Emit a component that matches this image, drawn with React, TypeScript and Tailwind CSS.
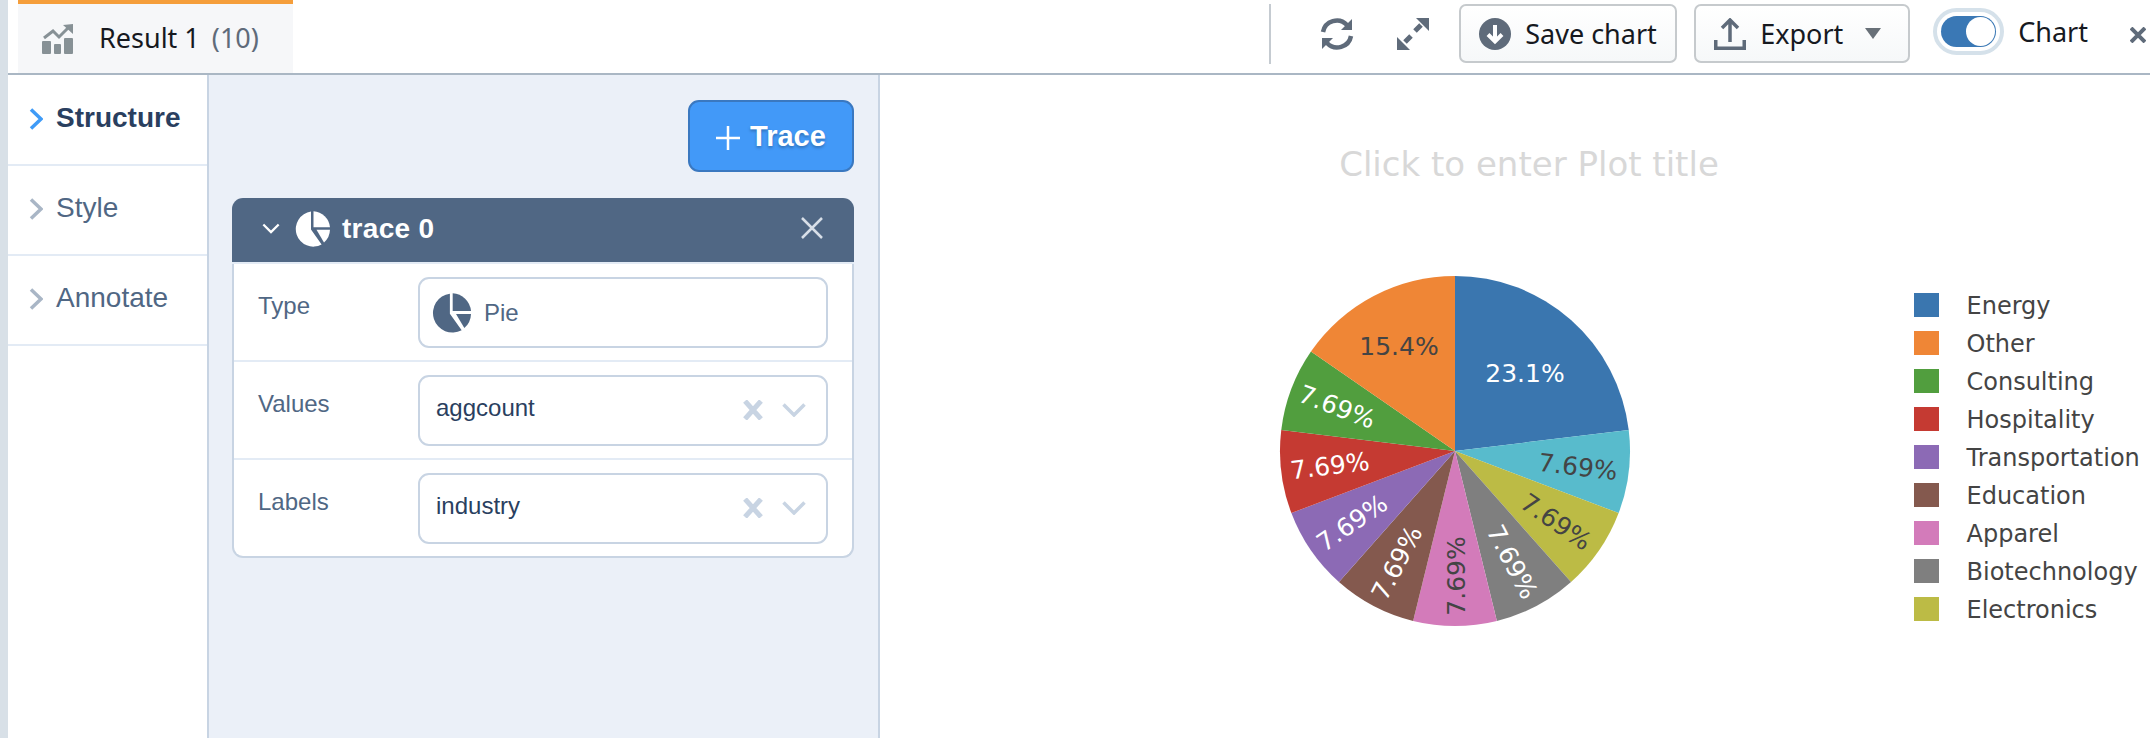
import React from "react";

const slices = [
  { name: "Energy", size: 3, color: "#3a76af", label: "23.1%", x: 1525, y: 373, rot: 0, text: "#ffffff" },
  { name: "Teal", size: 1, color: "#58bbcc", label: "7.69%", x: 1578, y: 467, rot: 6.9, text: "#444444" },
  { name: "Electronics", size: 1, color: "#bcbb45", label: "7.69%", x: 1556, y: 522, rot: 34.6, text: "#444444" },
  { name: "Biotechnology", size: 1, color: "#7f7f7f", label: "7.69%", x: 1512, y: 562, rot: 62.3, text: "#ffffff" },
  { name: "Apparel", size: 1, color: "#d37bba", label: "7.69%", x: 1456, y: 576, rot: -90, text: "#444444" },
  { name: "Education", size: 1, color: "#84594e", label: "7.69%", x: 1397, y: 563, rot: -62.3, text: "#ffffff" },
  { name: "Transportation", size: 1, color: "#8c6ab5", label: "7.69%", x: 1352, y: 523, rot: -34.6, text: "#ffffff" },
  { name: "Hospitality", size: 1, color: "#c53a32", label: "7.69%", x: 1330, y: 466, rot: -6.9, text: "#ffffff" },
  { name: "Consulting", size: 1, color: "#519e3e", label: "7.69%", x: 1337, y: 407, rot: 20.8, text: "#ffffff" },
  { name: "Other", size: 2, color: "#ef8636", label: "15.4%", x: 1399, y: 346, rot: 0, text: "#444444" },
];

const legend = [
  ["Energy", "#3a76af"],
  ["Other", "#ef8636"],
  ["Consulting", "#519e3e"],
  ["Hospitality", "#c53a32"],
  ["Transportation", "#8c6ab5"],
  ["Education", "#84594e"],
  ["Apparel", "#d37bba"],
  ["Biotechnology", "#7f7f7f"],
  ["Electronics", "#bcbb45"],
];

const slicePath = (from: number, to: number) => {
  const cx = 1455;
  const cy = 451;
  const r = 175;
  const a = (from / 13) * Math.PI * 2;
  const b = (to / 13) * Math.PI * 2;
  const large = to - from > 6.5 ? 1 : 0;
  return `M${cx} ${cy}L${cx + r * Math.sin(a)} ${cy - r * Math.cos(a)}A${r} ${r} 0 ${large} 1 ${cx + r * Math.sin(b)} ${cy - r * Math.cos(b)}Z`;
};

const PieIcon = ({ className }: { className: string }) => (
  <svg viewBox="0 0 36 36" className={className} fill="currentColor">
    <path d="M19.5 0.2A17.6 17.6 0 0 1 36 16.2L19.5 16.2Z" />
    <path d="M36 18.8A17.6 17.6 0 0 1 30 31.5L22.5 18.8Z" />
    <path d="M17 0.6L17 18.6L27.6 33.6A17.6 17.6 0 1 1 17 0.6Z" />
  </svg>
);

const ChevronRight = ({ className }: { className: string }) => (
  <svg viewBox="0 0 14 22" className={className} fill="none" stroke="currentColor" strokeWidth="3.5">
    <path d="M2 1.5L12 11L2 20.5" />
  </svg>
);

const SideItem = ({ label, active }: { label: string; active?: boolean }) => (
  <div className="h-[90px] border-b-2 border-[#e3ebf5] flex items-start pt-[25px] pl-[21px] font-['Liberation_Sans',sans-serif] text-[28px] leading-[34px]">
    <ChevronRight className={`w-[14px] h-[22px] mt-[7px] mr-[13px] ${active ? "text-[#3f9bf7]" : "text-[#a9b6c6]"}`} />
    <span className={active ? "font-bold text-[#2a3f5f]" : "text-[#506784]"}>{label}</span>
  </div>
);

const ClearIcons = () => (
  <div className="ml-auto flex items-center gap-[19px] mr-[20px] -mt-[1px]">
    <svg viewBox="0 0 20 20" className="w-5 h-5" fill="none" stroke="#c8d4e3" strokeWidth="5">
      <path d="M2 1L18 19M18 1L2 19" />
    </svg>
    <svg viewBox="0 0 24 14" className="w-6 h-[14px]" fill="none" stroke="#c8d4e3" strokeWidth="3.5">
      <path d="M1.5 1.5L12 12L22.5 1.5" />
    </svg>
  </div>
);

const Row = ({ label, last, children }: { label: string; last?: boolean; children: React.ReactNode }) => (
  <div className={`flex items-start pt-[13px] pl-[24px] ${last ? "h-[96px]" : "h-[98px] border-b-2 border-[#e3ebf5]"}`}>
    <div className="w-[160px] text-[24px] leading-[30px] text-[#506784] mt-[14px]">{label}</div>
    <div className="w-[410px] h-[71px] rounded-[11px] border-2 border-[#c8d4e3] bg-white flex items-center">{children}</div>
  </div>
);

export default function App() {
  let start = 0;
  return (
    <div className="w-[2150px] h-[738px] overflow-hidden flex bg-white font-['Noto_Sans',sans-serif]">
      <div className="w-2 bg-[#d8e0e7]" />
      <div className="flex-1 flex flex-col min-w-0">
        {/* top bar */}
        <div className="h-[75px] shrink-0 border-b-2 border-[#aab7c4] flex items-start">
          <div className="ml-[10px] w-[275px] h-[73px] bg-[#f6f7f9] border-t-4 border-[#f59e3b] flex items-center pl-[24px]">
            <svg viewBox="0 0 32 30" className="w-8 h-[30px] mr-[25px]" fill="#879196">
              <rect x="0" y="17" width="9" height="13" rx="1" />
              <rect x="12" y="20" width="7" height="10" rx="1" />
              <rect x="22" y="14" width="9" height="16" rx="1" />
              <path d="M2 14L11 7L17 13L26 4" fill="none" stroke="#879196" strokeWidth="3" />
              <path d="M21 1L31 0L31 10Z" />
            </svg>
            <span className="text-[27px] text-[#16191f] mr-[12px]">Result 1</span>
            <span className="text-[27px] text-[#5f6b7a]">(10)</span>
          </div>
          <div className="flex-1" />
          <div className="w-[2px] h-[60px] mt-1 bg-[#c5cbd1] mr-[49px]" />
          <svg viewBox="0 0 34 34" className="w-[34px] h-[34px] mt-[17px] mr-[42px]" fill="none" stroke="#5f6b7a" strokeWidth="4.5">
            <path d="M3 15A14 14 0 0 1 27 8" />
            <path d="M31 19A14 14 0 0 1 7 26" />
            <path d="M32 2L32 13L21 13Z" fill="#5f6b7a" stroke="none" />
            <path d="M2 32L2 21L13 21Z" fill="#5f6b7a" stroke="none" />
          </svg>
          <svg viewBox="0 0 34 34" className="w-[34px] h-[34px] mt-[17px] mr-[29px]" fill="#5f6b7a">
            <path d="M33 1L33 14L20 1Z" />
            <path d="M1 33L1 20L14 33Z" />
            <path d="M25 8L19 14M9 25L15 19" stroke="#5f6b7a" strokeWidth="5" />
          </svg>
          <button className="w-[218px] h-[59px] mt-1 rounded-[7px] border-2 border-[#c6cacd] bg-gradient-to-b from-white to-[#f6f8f9] flex items-center pl-[18px] text-[27px] text-[#16191f]">
            <svg viewBox="0 0 32 32" className="w-8 h-8 mr-[14px]">
              <circle cx="16" cy="16" r="16" fill="#5f6b7a" />
              <path d="M16 7L16 23M9 16.5L16 23.5L23 16.5" fill="none" stroke="#ffffff" strokeWidth="4" />
            </svg>
            <span className="mt-px">Save chart</span>
          </button>
          <button className="ml-[17px] w-[216px] h-[59px] mt-1 rounded-[7px] border-2 border-[#c6cacd] bg-gradient-to-b from-white to-[#f6f8f9] flex items-center pl-[18px] text-[27px] text-[#16191f]">
            <svg viewBox="0 0 32 32" className="w-8 h-8 mr-[14px]" fill="none" stroke="#5f6b7a" strokeWidth="3.5">
              <path d="M16 24L16 3M8 10L16 2L24 10" />
              <path d="M1.5 22L1.5 30.5L30.5 30.5L30.5 22" strokeWidth="4" />
            </svg>
            <span className="mt-px">Export</span>
            <svg viewBox="0 0 16 11" className="w-4 h-[11px] ml-[22px]" fill="#687078">
              <path d="M0 0L16 0L8 11Z" />
            </svg>
          </button>
          <div className="ml-[23px] mt-2 w-[71px] h-[47px] rounded-full border-4 border-[#d5e1ea] p-1">
            <div className="h-[31px] rounded-full bg-[#3a78b5] flex items-center justify-end pr-px">
              <div className="w-[29px] h-[29px] rounded-full bg-white" />
            </div>
          </div>
          <span className="ml-[14px] mt-[14px] text-[27px] leading-[36px] text-[#16191f]">Chart</span>
          <svg viewBox="0 0 16 16" className="w-4 h-4 ml-[42px] mr-1 mt-[27px]" fill="none" stroke="#5f6b7a" strokeWidth="4">
            <path d="M1 1L15 15M15 1L1 15" />
          </svg>
        </div>

        <div className="flex-1 flex min-h-0">
          {/* sections */}
          <div className="w-[201px] shrink-0 border-r-2 border-[#c8d4e3] pt-px">
            <SideItem label="Structure" active />
            <SideItem label="Style" />
            <SideItem label="Annotate" />
          </div>

          {/* editor panel */}
          <div className="w-[671px] shrink-0 bg-[#ebf0f8] border-r-2 border-[#c8d4e3] pt-[25px] pl-[23px] pr-[24px] font-['Liberation_Sans',sans-serif]">
            <div className="flex justify-end">
              <button className="w-[166px] h-[72px] rounded-[11px] border-2 border-[#3a78c0] bg-[#4299f8] text-white font-bold text-[29px] flex items-center justify-center [text-shadow:0_2px_3px_rgba(0,0,0,0.25)]">
                <svg viewBox="0 0 24 24" className="w-6 h-6 mr-[10px] mt-[4px]" stroke="#ffffff" strokeWidth="2.5">
                  <path d="M12 0L12 24M0 12L24 12" />
                </svg>
                <span className="mt-px">Trace</span>
              </button>
            </div>
            <div className="mt-[26px]">
              <div className="h-[66px] rounded-t-[11px] bg-[#506784] border-b-2 border-[#e3ebf5] flex items-center pl-[30px] pr-[31px] pb-[3px] text-white">
                <svg viewBox="0 0 20 12" className="w-[18px] h-[11px] mr-[14px]" fill="none" stroke="#ffffff" strokeWidth="2.5">
                  <path d="M1.5 1.5L10 10L18.5 1.5" />
                </svg>
                <PieIcon className="w-9 h-9 mr-[12px] text-white" />
                <span className="font-bold text-[28px] tracking-[0.3px]">trace 0</span>
                <svg viewBox="0 0 22 22" className="w-[22px] h-[22px] ml-auto -mt-[1px]" fill="none" stroke="#d8dfe8" strokeWidth="2.5">
                  <path d="M1 1L21 21M21 1L1 21" />
                </svg>
              </div>
              <div className="rounded-b-[11px] border-x-2 border-b-2 border-[#c8d4e3] bg-white">
                <Row label="Type">
                  <PieIcon className="w-10 h-10 ml-[11px] mr-[13px] text-[#506784]" />
                  <span className="text-[24px] text-[#506784]">Pie</span>
                </Row>
                <Row label="Values">
                  <span className="ml-[16px] -mt-[6px] text-[24px] text-[#2a3f5f]">aggcount</span>
                  <ClearIcons />
                </Row>
                <Row label="Labels" last>
                  <span className="ml-[16px] -mt-[6px] text-[24px] text-[#2a3f5f]">industry</span>
                  <ClearIcons />
                </Row>
              </div>
            </div>
          </div>

          {/* plot */}
          <div className="flex-1 min-w-0">
            <svg viewBox="880 75 1270 663" className="w-[1270px] h-[663px] block font-['DejaVu_Sans',sans-serif]">
              <text x="1529" y="176" textAnchor="middle" fontSize="34" fill="#d8d8d8">
                Click to enter Plot title
              </text>
              {slices.map((s) => {
                const d = slicePath(start, start + s.size);
                start += s.size;
                return <path key={s.name} d={d} fill={s.color} />;
              })}
              {slices.map((s) => (
                <text
                  key={s.name}
                  x={s.x}
                  y={s.y}
                  textAnchor="middle"
                  dominantBaseline="central"
                  fontSize="25"
                  fill={s.text}
                  transform={`rotate(${s.rot} ${s.x} ${s.y})`}
                >
                  {s.label}
                </text>
              ))}
              {legend.map(([name, color], i) => (
                <g key={name}>
                  <rect x="1914" y={293 + i * 38} width="25" height="24" fill={color} />
                  <text x="1966.5" y={314 + i * 38} fontSize="24" fill="#444444">
                    {name}
                  </text>
                </g>
              ))}
            </svg>
          </div>
        </div>
      </div>
    </div>
  );
}
